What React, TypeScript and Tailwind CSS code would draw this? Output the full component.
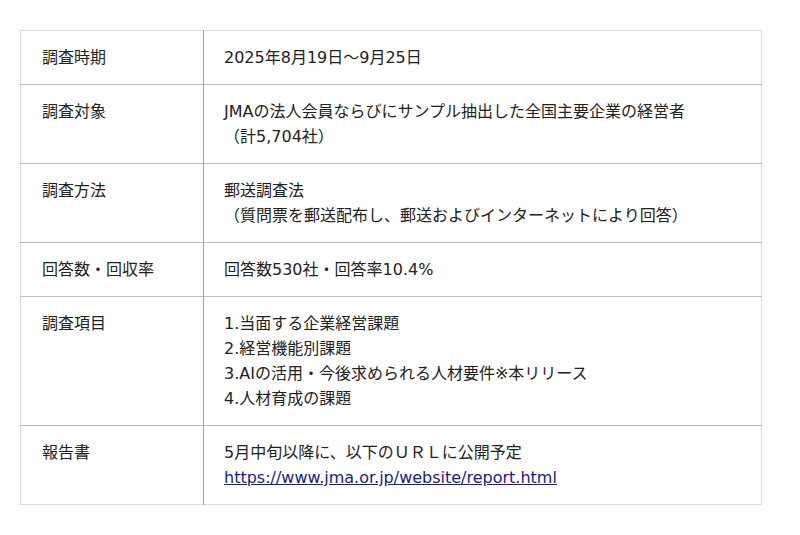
const ROWS: { label: string, lines: React.ReactNode[] }[] = [
  { label: '調査時期', lines: ['2025年8月19日～9月25日'] },
  { label: '調査対象', lines: ['JMAの法人会員ならびにサンプル抽出した全国主要企業の経営者', '（計5,704社）'] },
  { label: '調査方法', lines: ['郵送調査法', '（質問票を郵送配布し、郵送およびインターネットにより回答）'] },
  { label: '回答数・回収率', lines: ['回答数530社・回答率10.4%'] },
  {
    label: '調査項目',
    lines: [
      '1.当面する企業経営課題',
      '2.経営機能別課題',
      '3.AIの活用・今後求められる人材要件※本リリース',
      '4.人材育成の課題',
    ],
  },
  {
    label: '報告書',
    lines: [
      '5月中旬以降に、以下のＵＲＬに公開予定',
      <a href="#" className="text-[#1a1a8c] underline">https://www.jma.or.jp/website/report.html</a>,
    ],
  },
];

export default function App() {
  return (
    <main className="w-[800px] h-[535px] bg-white pt-[30px] pl-[20px] font-['DejaVu_Sans','Noto_Sans_CJK_JP',sans-serif] text-[16px] leading-[25px] text-[#222]">
      <table className="w-[742px] border-collapse border border-[#dcdcdc]">
        <tbody>
          {ROWS.map((r, idx) => (
            <tr key={idx} className="border-t border-[#bdbdbd] first:border-t-[#dcdcdc]">
              <td className="w-[183px] align-top px-[21px] py-[14px] border-r border-[#a3a3a3]">{r.label}</td>
              <td className="align-top px-[20px] py-[14px]">
                {r.lines.map((l, i) => <div key={i}>{l}</div>)}
              </td>
            </tr>
          ))}
        </tbody>
      </table>
    </main>
  )
}
